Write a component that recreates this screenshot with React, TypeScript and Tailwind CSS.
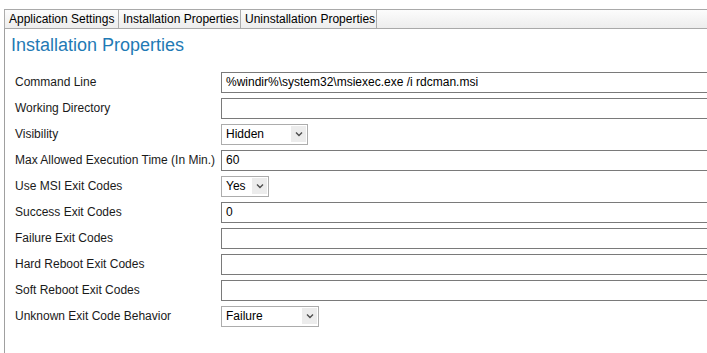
import React from "react";

const font = { fontFamily: '"Liberation Sans", Arial, sans-serif' };

function TextBox({ value }: { value?: string }) {
  return (
    <div className="flex-1 h-[21px] border border-r-0 border-[#7a7a7a] bg-white flex items-center pl-[4px] text-[12px] text-black whitespace-nowrap overflow-hidden">
      {value}
    </div>
  );
}

function Chevron() {
  return (
    <svg width="8" height="6" viewBox="0 0 8 6" className="block">
      <path d="M1 1.5 L4 4.5 L7 1.5" fill="none" stroke="#4d4d4d" strokeWidth="1.4" />
    </svg>
  );
}

function Select({ value, width }: { value: string; width: string }) {
  return (
    <div className={`${width} h-[21px] border border-[#acacac] bg-white flex items-center justify-between pl-[4px] pr-[1px] text-[12px] text-black`}>
      <span>{value}</span>
      <div className="w-[15px] h-[16px] bg-[#ececec] flex items-center justify-center">
        <Chevron />
      </div>
    </div>
  );
}

type Row = { label: string; kind: "text" | "select"; value?: string; width?: string };

const rows: Row[] = [
  { label: "Command Line", kind: "text", value: "%windir%\\system32\\msiexec.exe /i rdcman.msi" },
  { label: "Working Directory", kind: "text" },
  { label: "Visibility", kind: "select", value: "Hidden", width: "w-[87px]" },
  { label: "Max Allowed Execution Time (In Min.)", kind: "text", value: "60" },
  { label: "Use MSI Exit Codes", kind: "select", value: "Yes", width: "w-[48px]" },
  { label: "Success Exit Codes", kind: "text", value: "0" },
  { label: "Failure Exit Codes", kind: "text" },
  { label: "Hard Reboot Exit Codes", kind: "text" },
  { label: "Soft Reboot Exit Codes", kind: "text" },
  { label: "Unknown Exit Code Behavior", kind: "select", value: "Failure", width: "w-[98px]" },
];

export default function App() {
  return (
    <div className="w-[707px] h-[353px] bg-white overflow-hidden flex flex-col pt-[9px]" style={font}>
      <div className="ml-[4px] h-[20px] flex border-t border-b border-[#a9a9a9] bg-gradient-to-b from-[#fcfcfc] to-[#ededed] text-[12px] text-black">
        <div className="w-[114px] border-l border-[#acacac] pl-[4px] flex items-center whitespace-nowrap">
          Application Settings
        </div>
        <div className="w-[122px] border-l border-[#acacac] pl-[4px] flex items-center whitespace-nowrap">
          Installation Properties
        </div>
        <div className="w-[137px] border-l border-r border-[#acacac] pl-[4px] flex items-center whitespace-nowrap">
          Uninstallation Properties
        </div>
        <div className="flex-1" />
      </div>
      <div className="ml-[4px] flex-1 border-l border-[#a0a0a0] flex flex-col">
        <div className="pl-[6px] pt-[5px] h-[36px] text-[18px] leading-[22px] text-[#1f7ab5]">
          Installation Properties
        </div>
        <div className="flex flex-col pt-[4px]">
          {rows.map((r) => (
            <div key={r.label} className="h-[26px] flex items-center">
              <div className="w-[216px] pl-[10px] text-[12px] text-[#1a1a1a] whitespace-nowrap">{r.label}</div>
              {r.kind === "text" ? (
                <TextBox value={r.value} />
              ) : (
                <Select value={r.value!} width={r.width!} />
              )}
            </div>
          ))}
        </div>
      </div>
    </div>
  );
}
